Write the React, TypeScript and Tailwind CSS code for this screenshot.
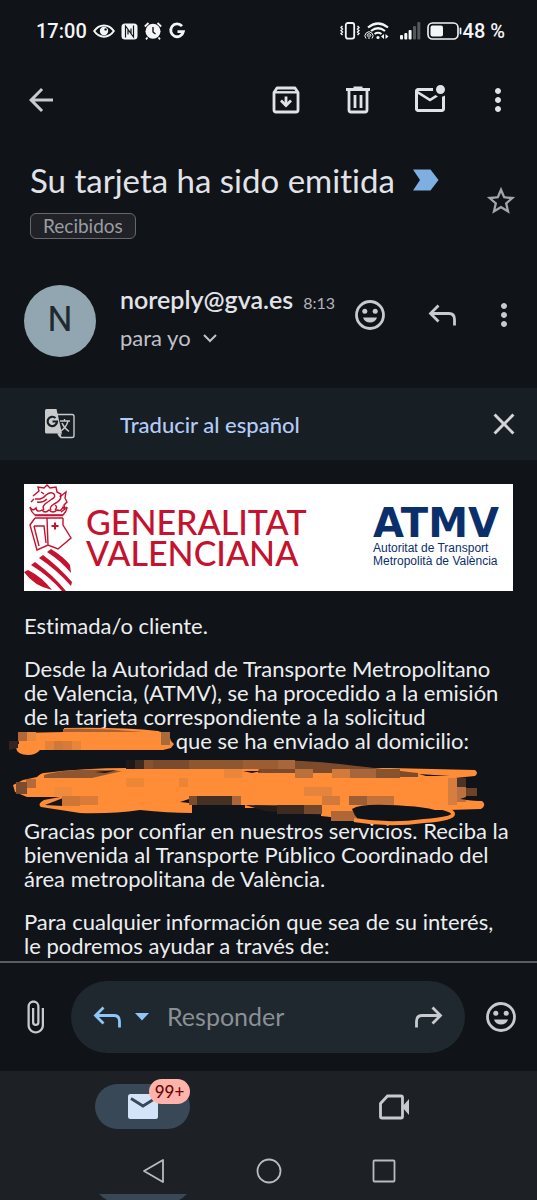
import type { ReactNode } from "react";
import {
    MdArrowBack,
    MdAttachFile,
    MdClose,
    MdMoreVert,
    MdOutlineMarkEmailUnread,
    MdStarBorder,
} from "react-icons/md";

function IconButton({
    label,
    className = "",
    children,
}: {
    label: string;
    className?: string;
    children: ReactNode;
}) {
    return (
        <button
            type="button"
            aria-label={label}
            className={`flex size-9 shrink-0 items-center justify-center ${className}`}
        >
            {children}
        </button>
    );
}

/* ───── Icons ───── */

function SmileIcon() {
    return (
        <svg viewBox="0 0 36 36" className="size-9" fill="none">
            <circle cx="18" cy="18" r="13.5" stroke="currentColor" strokeWidth="2.8" />
            <circle cx="12.8" cy="14.3" r="2.5" fill="currentColor" />
            <circle cx="23.2" cy="14.3" r="2.5" fill="currentColor" />
            <path d="M11 20.5h14c-1 3.2-3.6 5-7 5s-6-1.8-7-5z" fill="currentColor" />
        </svg>
    );
}

function ReplyIcon({ flip = false }: { flip?: boolean }) {
    return (
        <svg
            viewBox="0 0 36 36"
            className={flip ? "size-9 -scale-x-100" : "size-9"}
            fill="none"
            stroke="currentColor"
            strokeWidth="2.8"
        >
            <path d="M14.5 8.5L6.5 16.5l8 8M6.5 16.5H25q5.5 0 5.5 6v6" />
        </svg>
    );
}

function ArchiveIcon() {
    return (
        <svg viewBox="0 0 36 36" className="size-9" fill="none" stroke="currentColor">
            <path d="M6 10.5L9 6h18l3 4.5V28q0 2-2 2H8q-2 0-2-2z" strokeWidth="2.8" strokeLinejoin="round" />
            <path d="M6 10.3h24" strokeWidth="2.4" />
            <path d="M18 14.5v9" strokeWidth="2.8" />
            <path d="M13 18.5l5 5 5-5" strokeWidth="2.8" />
        </svg>
    );
}

function TrashIcon() {
    return (
        <svg viewBox="0 0 36 36" className="size-9" fill="none" stroke="currentColor">
            <path d="M6 7.5h24M13.5 5.8h9" strokeWidth="2.8" />
            <path d="M9 8v20q0 2 2 2h14q2 0 2-2V8" strokeWidth="2.8" />
            <path d="M15 13v13M21 13v13" strokeWidth="2.8" />
        </svg>
    );
}

function TranslateIcon() {
    return (
        <svg viewBox="0 0 32 32" className="size-8">
            <path d="M13 6.5h15q2 0 2 2v19q0 2-2 2H17l-2-5" fill="none" stroke="#c9cacb" strokeWidth="1.4" />
            <path d="M2.5 1H12.5l5.5 24.5H2.5Q1 25.5 1 24V2.5Q1 1 2.5 1z" fill="#c9cacb" />
            <path d="M13 25.5h5l-2.5 4z" fill="#c9cacb" />
            <path d="M11.5 10A4.7 4.7 0 1 0 13 13.5H8.5" fill="none" stroke="#171e24" strokeWidth="2.2" />
            <path
                d="M16 13h10M20.5 11v2M24 13q-1.5 6-7 10M18 15q2 5 7 8.5"
                fill="none"
                stroke="#c9cacb"
                strokeWidth="1.4"
            />
        </svg>
    );
}

/* ───── Status bar ───── */

function StatusBar() {
    return (
        <header className="flex h-[62px] items-center justify-between pr-8 pl-9 font-[Roboto,sans-serif] text-[20px] font-medium text-[#f4f5f6]">
            <div className="flex items-center gap-1.5">
                <span>17:00</span>
                <svg viewBox="0 0 22 16" className="h-4 w-[22px]" fill="none">
                    <path d="M1.2 8C6 .5 16 .5 20.8 8 16 15.5 6 15.5 1.2 8z" stroke="currentColor" strokeWidth="2" />
                    <circle cx="11" cy="8" r="4.2" fill="currentColor" />
                    <circle cx="12.6" cy="6.4" r="1.2" fill="#101318" />
                </svg>
                <svg viewBox="0 0 17 17" className="size-[17px]">
                    <rect x=".5" y=".5" width="16" height="16" rx="3.5" fill="currentColor" />
                    <path
                        d="M4.5 14.5V3l5.5 7.500V5.500M12.500 2.500V14L7 6.500v5"
                        fill="none"
                        stroke="#101318"
                        strokeWidth="1.2"
                    />
                </svg>
                <svg viewBox="0 0 18 18" className="size-[18px]" fill="none" stroke="currentColor">
                    <circle cx="9" cy="9.300" r="7.5" fill="currentColor" stroke="none" />
                    <path d="M.8 4.500L4.500 1M17.200 4.500L13.500 1M3.500 15.500L2 17.300M14.500 15.500l1.500 1.800" strokeWidth="1.8" />
                    <path d="M9 5v5l2.500 2" stroke="#101318" strokeWidth="1.4" />
                </svg>
                <svg viewBox="0 0 18 18" className="size-[18px]" fill="none">
                    <path d="M14 4.200A6.400 6.400 0 1 0 15.400 9.600H9.500" stroke="currentColor" strokeWidth="2.8" />
                </svg>
            </div>
            <div className="flex items-center">
                <svg viewBox="0 0 20 18" className="mr-1 h-[18px] w-5" fill="none" stroke="currentColor">
                    <rect x="5.8" y="1" width="8.4" height="15.6" rx="2" strokeWidth="1.8" />
                    <path
                        d="M2.500 4L1 5.500l1.500 1.500L1 8.500 2.500 10 1 11.500 2.500 13M17.500 4L19 5.500 17.500 7 19 8.500 17.500 10l1.500 1.500-1.500 1.500"
                        strokeWidth="1.4"
                    />
                </svg>
                <svg viewBox="0 0 26 18" className="mr-2.5 h-[18px] w-[26px]" fill="none" stroke="currentColor">
                    <path d="M4 5.500Q14 -2.500 24 5.500M7 9q7-5.500 14 0" strokeWidth="2.2" />
                    <path d="M10.500 12q3.500-2.500 7 0" strokeWidth="2" />
                    <circle cx="14" cy="15.500" r="1.600" fill="currentColor" stroke="none" />
                    <path d="M2 16.500a4 4 0 1 1 6 0M3.500 14.500a1.800 1.800 0 1 1 3 0M5 13v4" strokeWidth="1" />
                    <path d="M20 12v5l-3-2.500zM21.500 12v5l3-2.500z" fill="currentColor" stroke="none" />
                </svg>
                <svg viewBox="0 0 21 18" className="mr-1.5 h-[18px] w-[21px]" fill="currentColor">
                    <rect x="0" y="13" width="3" height="4.5" rx="1" />
                    <rect x="4.3" y="11" width="3" height="6.5" rx="1" />
                    <rect x="8.6" y="8" width="3" height="9.5" rx="1" />
                    <rect x="13" y="4" width="3" height="13.5" rx="1" opacity=".3" />
                    <rect x="17.3" y="0" width="3" height="17.5" rx="1" opacity=".3" />
                </svg>
                <svg viewBox="0 0 36 18" className="h-[18px] w-9" fill="none">
                    <rect x="1" y="1" width="30" height="16" rx="4.5" stroke="currentColor" strokeWidth="1.6" />
                    <rect x="3.5" y="3.5" width="12.5" height="11" rx="2" fill="currentColor" />
                    <path d="M33.500 6.500v5" stroke="currentColor" strokeWidth="1.8" strokeLinecap="round" />
                </svg>
                <span>48 %</span>
            </div>
        </header>
    );
}

/* ───── Message header ───── */

function Toolbar() {
    return (
        <nav aria-label="Acciones" className="flex h-[76px] items-center pr-[21px] pl-[23px] text-[#e1e3e8]">
            <IconButton label="Atrás" className="mr-auto text-[#c8cad0]">
                <MdArrowBack className="size-9" />
            </IconButton>
            <div className="flex items-center gap-9">
                <IconButton label="Archivar">
                    <ArchiveIcon />
                </IconButton>
                <IconButton label="Eliminar">
                    <TrashIcon />
                </IconButton>
                <IconButton label="Marcar como no leído">
                    <MdOutlineMarkEmailUnread className="size-9" />
                </IconButton>
                <IconButton label="Más opciones" className="-ml-1">
                    <MdMoreVert className="size-9" />
                </IconButton>
            </div>
        </nav>
    );
}

function Subject() {
    return (
        <section className="flex items-center justify-between pt-[21px] pr-[18px] pl-[30px]">
            <div>
                <h1 className="flex items-center gap-[18px] text-[33px] leading-[42px] text-[#e1e3e8]">
                    Su tarjeta ha sido emitida
                    <svg viewBox="0 0 26 22" className="h-[22px] w-[26px]">
                        <path d="M0 .5h17.500l8 10.500-8 10.500H0L7 11z" fill="#7db0e0" />
                    </svg>
                </h1>
                <span className="mt-3 inline-flex h-[26px] items-center rounded-md border border-[#66686c] bg-[#202227] px-3 text-[19px] text-[#9b9da2]">
                    Recibidos
                </span>
            </div>
            <IconButton label="Destacar" className="mt-1 text-[#a4a6ab]">
                <MdStarBorder className="size-[34px]" />
            </IconButton>
        </section>
    );
}

function Sender() {
    return (
        <section className="flex items-center pt-11 pr-[15px] pb-8 pl-6">
            <div className="flex size-[72px] items-center justify-center rounded-full bg-[#91a6b0] font-[Roboto,sans-serif] text-[35px] text-[#1f292f]">
                N
            </div>
            <div className="ml-6 flex-1 pb-1">
                <div className="flex items-baseline gap-2.5">
                    <span className="text-[25px] leading-8 font-semibold text-[#e1e3e8]">noreply@gva.es</span>
                    <span className="text-[16px] text-[#b3b5ba]">8:13</span>
                </div>
                <button type="button" className="mt-[7px] flex items-center gap-3 text-[22px] leading-8 text-[#c0c2c7]">
                    para yo
                    <svg viewBox="0 0 14 9" className="h-[9px] w-3.5" fill="none">
                        <path d="M1 1l6 6 6-6" stroke="currentColor" strokeWidth="2" />
                    </svg>
                </button>
            </div>
            <div className="-mt-3 flex items-center gap-9 text-[#c8cad0]">
                <IconButton label="Añadir reacción">
                    <SmileIcon />
                </IconButton>
                <IconButton label="Responder">
                    <ReplyIcon />
                </IconButton>
                <IconButton label="Más" className="-ml-2.5">
                    <MdMoreVert className="size-9" />
                </IconButton>
            </div>
        </section>
    );
}

function TranslateBar() {
    return (
        <section className="-mt-0.5 flex h-[72px] items-center bg-[#171e24] pr-[15px] pl-11">
            <TranslateIcon />
            <button type="button" className="ml-11 text-[22px] font-medium text-[#b4cbf7]">
                Traducir al español
            </button>
            <IconButton label="Cerrar" className="ml-auto text-[#d3d4d6]">
                <MdClose className="size-9" />
            </IconButton>
        </section>
    );
}

/* ───── Letterhead ───── */

function Crest() {
    return (
        <svg viewBox="0 0 50 107" className="h-[107px] w-[50px] shrink-0" fill="none" stroke="#c4122f" strokeWidth="1.4">
            <path d="M7 18l3-3M9 12l6-5-1-4 6 1 3-3 3 3 6-1 1 5 4 2-1 3" />
            <path d="M11 15h5q4-1 6-4 5-4 8-1 2 3-2 5l-7 5q-3 3-1 6M13 18q6 1 10-3M27 26q-2-3 3-6 7-3 7-8l5-4-1 6 2 4-3 3 1 4-4 3" />
            <path d="M17 8l3 2M31 21q3 2 0 5" />
            <path d="M6 23q1 5 5 8h28q4-4 4-8M6 23q3 5 6 1 1 5 6 2 3 4 7 0 4 4 8 0 4 2 6-3 1 3 4 0" />
            <path d="M11 31.500h28M11 34h28" strokeWidth="1.6" />
            <path d="M11 34l-5 7 7 25 11-5 10 4 13-11-8-13V34M23 34l1 27M10 42h10l2 17M10 42l5 20" />
            <path d="M31 38.500v7M27.500 42h7" strokeWidth="2" />
            <path
                d="M23 68l4-3q13 8 19 16l1 8q-10-12-24-21zM15 74l4-3q16 12 29 27l-1 4Q33 86 15 74zM7 81l4-3q18 13 31 29h-4Q25 92 7 81zM0 88l4-2q14 7 24 20Q10 102 0 88z"
                fill="#c4122f"
                stroke="none"
            />
        </svg>
    );
}

function Letterhead() {
    return (
        <div className="flex h-[107px] overflow-hidden bg-white">
            <Crest />
            <p className="mt-[22px] ml-3 text-[34px] leading-[31px] font-medium text-[#c4122f]">
                GENERALITAT
                <br />
                VALENCIANA
            </p>
            <div className="mt-5 ml-auto w-[140px] text-[#0b2f6b]">
                <p className="font-['DejaVu_Sans',sans-serif] text-[40px] leading-[38px] font-bold">ATMV</p>
                <p className="font-['Liberation_Sans',sans-serif] text-[12px] leading-[13px] whitespace-nowrap">
                    Autoritat de Transport
                    <br />
                    Metropolità de València
                </p>
            </div>
        </div>
    );
}

/* ───── Scribbled-out details ───── */

const MOSAIC_SMALL = [
    { x: 18, y: 734, w: 9, h: 9, fill: "#b4683a" },
    { x: 27, y: 734, w: 9, h: 9, fill: "#e98840" },
    { x: 45, y: 743, w: 9, h: 9, fill: "#e5823a" },
    { x: 54, y: 743, w: 9, h: 9, fill: "#cf7838" },
    { x: 63, y: 743, w: 9, h: 9, fill: "#d87b36" },
    { x: 72, y: 743, w: 9, h: 9, fill: "#e98538" },
    { x: 161, y: 734, w: 9, h: 13, fill: "#a86a3c" },
];

const MOSAIC_LARGE = [
    { x: 126, y: 761, w: 9, h: 9, fill: "#20191a" },
    { x: 135, y: 761, w: 9, h: 9, fill: "#3d2a20" },
    { x: 144, y: 761, w: 9, h: 9, fill: "#875230" },
    { x: 153, y: 761, w: 36, h: 9, fill: "#7a4b2d" },
    { x: 189, y: 761, w: 54, h: 9, fill: "#8f5730" },
    { x: 243, y: 761, w: 35, h: 9, fill: "#9d5d32" },
    { x: 278, y: 761, w: 17, h: 9, fill: "#a9663a" },
    { x: 224, y: 770, w: 18, h: 9, fill: "#ea863c" },
    { x: 295, y: 770, w: 18, h: 9, fill: "#b9703b" },
    { x: 332, y: 770, w: 18, h: 9, fill: "#d17a3a" },
    { x: 350, y: 770, w: 26, h: 9, fill: "#a7653b" },
    { x: 376, y: 770, w: 24, h: 9, fill: "#86532f" },
    { x: 26, y: 780, w: 10, h: 9, fill: "#b5693a" },
    { x: 16, y: 783, w: 11, h: 12, fill: "#7e4c2c" },
    { x: 126, y: 779, w: 18, h: 9, fill: "#ee8638" },
    { x: 179, y: 779, w: 9, h: 9, fill: "#ea8538" },
    { x: 54, y: 788, w: 18, h: 9, fill: "#f08a3d" },
    { x: 304, y: 788, w: 28, h: 9, fill: "#e6843d" },
    { x: 62, y: 797, w: 18, h: 10, fill: "#cf7636" },
    { x: 80, y: 797, w: 18, h: 9, fill: "#d97c38" },
    { x: 189, y: 797, w: 9, h: 9, fill: "#7a4b2d" },
    { x: 197, y: 797, w: 35, h: 9, fill: "#453024" },
    { x: 232, y: 797, w: 9, h: 9, fill: "#a9663a" },
    { x: 322, y: 797, w: 18, h: 9, fill: "#d27a3b" },
    { x: 349, y: 797, w: 18, h: 9, fill: "#9d5e34" },
    { x: 367, y: 797, w: 27, h: 9, fill: "#c27239" },
    { x: 277, y: 806, w: 27, h: 9, fill: "#3d2b22" },
    { x: 304, y: 806, w: 18, h: 9, fill: "#74482c" },
    { x: 331, y: 812, w: 26, h: 10, fill: "#b06635" },
    { x: 448, y: 779, w: 9, h: 27, fill: "#d67d40" },
    { x: 457, y: 779, w: 9, h: 9, fill: "#4a342a" },
    { x: 457, y: 788, w: 9, h: 15, fill: "#bb7041" },
    { x: 466, y: 788, w: 11, h: 9, fill: "#6d4228" },
];

type MosaicCell = { x: number; y: number; w: number; h: number; fill: string };

function Mosaic({ cells }: { cells: MosaicCell[] }) {
    return (
        <g>
            {cells.map((c) => (
                <rect key={`${c.x}-${c.y}`} x={c.x} y={c.y} width={c.w} height={c.h} fill={c.fill} />
            ))}
        </g>
    );
}

function HiddenNumber() {
    return (
        <span className="relative inline-block h-4 w-[146px]">
            <svg
                viewBox="8 727 168 32"
                className="absolute -top-2 -left-4 h-8 w-[168px] max-w-none"
                aria-label="Dato oculto"
            >
                <path
                    d="M18 735l46-1v-4q58-1 94 3 12 3 13 10l3 3-3 4-8 2H40q-4 5-12 5-11 0-12-7 0-4 3-4z"
                    fill="#ff8d37"
                />
                <path d="M9 743h9v7l-9 2z" fill="#32241f" />
                <path d="M63 731q40-1 80 3H63z" fill="#a66135" />
                <Mosaic cells={MOSAIC_SMALL} />
            </svg>
        </span>
    );
}

function HiddenAddress() {
    return (
        <div className="relative h-[66px]">
            <svg
                viewBox="8 758 480 70"
                className="absolute top-1 -left-4 h-[70px] w-[480px] max-w-none"
                aria-label="Dirección oculta"
            >
                <path
                    d="M37 778q4-4 7-4 40-5 84-5h262l85 2q4 3 0 6l-20 2-5 21 32 2q5 4-1 8l-32 1H357l-8 9-28-3v-8H192v5q-24 0-52-3-28 4-60 3L41 808q-4-3 3-7l16-3H27l-12-5-2-7 10-5z"
                    fill="#ff8d37"
                />
                <path d="M260 761q45 0 80 4 50 6 78 9v4h-45l-25-4h-90z" fill="#7b4b2c" />
                <path d="M44 776q20-6 58-5l20 1-30 7H44z" fill="#8f5430" />
                <path d="M95 773l22-2-12 3zM243 772h18l-9 2zM419 775l31 2h-24z" fill="#14151a" />
                <path d="M45 806l18-7v8z" fill="#14151a" />
                <path d="M180 803l12-4-3 5zM192 806h53v12h-53z" fill="#101318" />
                <path d="M245 806l76 1v9l-56-4z" fill="#251d1b" />
                <Mosaic cells={MOSAIC_LARGE} />
                <path d="M352 810q8-5 35-4 42 1 57 8 4 4-7 5-40 4-79 1-4-4-6-10z" fill="#101318" />
                <path
                    d="M354 821q35 6 70 1 29-2 29-7 0-6-30-9"
                    fill="none"
                    stroke="#ff8d37"
                    strokeWidth="4"
                />
                <path d="M466 779h16v23l-14-1-8-1 6-2h12v-9h-12z" fill="#101318" />
            </svg>
        </div>
    );
}

function Message() {
    return (
        <main className="flex-1 px-6 pt-6 text-[22px] leading-6 text-[#eceef0]">
            <Letterhead />
            <p className="mt-[23px]">Estimada/o cliente.</p>
            <p className="mt-[19px] whitespace-nowrap">
                Desde la Autoridad de Transporte Metropolitano
                <br />
                de Valencia, (ATMV), se ha procedido a la emisión
                <br />
                de la tarjeta correspondiente a la solicitud
                <br />
                <HiddenNumber /> que se ha enviado al domicilio:
            </p>
            <HiddenAddress />
            <p className="whitespace-nowrap">
                Gracias por confiar en nuestros servicios. Reciba la
                <br />
                bienvenida al Transporte Público Coordinado del
                <br />
                área metropolitana de València.
            </p>
            <p className="mt-[19px] whitespace-nowrap">
                Para cualquier información que sea de su interés,
                <br />
                le podremos ayudar a través de:
            </p>
        </main>
    );
}

/* ───── Bottom area ───── */

function ReplyBar() {
    return (
        <section className="flex h-[110px] items-center border-t-2 border-[#5b5d61] pr-[18px] pl-[17px] text-[#c8cad0]">
            <IconButton label="Adjuntar archivo">
                <MdAttachFile className="size-9" />
            </IconButton>
            <div className="mx-[18px] flex h-[72px] flex-1 items-center rounded-full bg-[#1f272f] px-[18px]">
                <IconButton label="Responder" className="text-[#90c5f8]">
                    <ReplyIcon />
                </IconButton>
                <button type="button" aria-label="Tipo de respuesta" className="ml-2.5 text-[#90c5f8]">
                    <svg viewBox="0 0 14 8" className="h-2 w-3.5">
                        <path d="M0 0h14L7 7.500z" fill="currentColor" />
                    </svg>
                </button>
                <input
                    type="text"
                    aria-label="Responder"
                    placeholder="Responder"
                    className="ml-[18px] w-0 flex-1 bg-transparent text-[25px] outline-none placeholder:text-[#8b9096]"
                />
                <IconButton label="Reenviar">
                    <ReplyIcon flip />
                </IconButton>
            </div>
            <IconButton label="Emoji">
                <SmileIcon />
            </IconButton>
        </section>
    );
}

function BottomNav() {
    return (
        <footer className="bg-[#1d2024]">
            <nav aria-label="Secciones" className="grid h-[71px] grid-cols-[285px_1fr] items-center">
                <button
                    type="button"
                    aria-label="Correo"
                    className="relative flex h-[45px] w-[95px] items-center justify-center justify-self-center rounded-full bg-[#384857]"
                >
                    <svg viewBox="0 0 30 25" className="h-[25px] w-[30px]">
                        <rect width="30" height="25" rx="2.5" fill="#d3e4f8" />
                        <path d="M3 4.500l12 7.500 12-7.500" fill="none" stroke="#384857" strokeWidth="2.8" />
                    </svg>
                    <span className="absolute -top-[5px] right-0 flex h-[25px] w-[41px] items-center justify-center rounded-full bg-[#ffb3aa] text-[17px] font-medium text-[#690608]">
                        99+
                    </span>
                </button>
                <button type="button" aria-label="Videollamada" className="ml-[93px] justify-self-start text-[#c8cad0]">
                    <svg viewBox="0 0 32 26" className="h-[26px] w-8" fill="none">
                        <path
                            d="M2.500 9.500L9.500 2H23q1.500 0 1.500 1.500v19q0 1.500-1.500 1.500H4q-1.500 0-1.500-1.500z"
                            stroke="currentColor"
                            strokeWidth="2.8"
                        />
                        <path d="M24 13l7-8v16z" fill="currentColor" />
                    </svg>
                </button>
            </nav>
            <div className="flex h-[52px] items-center justify-center gap-[90px] pt-1.5 text-[#b9bbbe]">
                <button type="button" aria-label="Volver">
                    <svg viewBox="0 0 24 26" className="h-[26px] w-6" fill="none">
                        <path d="M2 13L21 2v22z" stroke="currentColor" strokeWidth="1.8" strokeLinejoin="round" />
                    </svg>
                </button>
                <button type="button" aria-label="Inicio">
                    <svg viewBox="0 0 26 26" className="size-[26px]" fill="none">
                        <circle cx="13" cy="13" r="11.5" stroke="currentColor" strokeWidth="1.8" />
                    </svg>
                </button>
                <button type="button" aria-label="Recientes">
                    <svg viewBox="0 0 24 24" className="size-6" fill="none">
                        <rect x="1.5" y="1.5" width="21" height="21" rx="1" stroke="currentColor" strokeWidth="1.8" />
                    </svg>
                </button>
            </div>
            <svg viewBox="0 0 88 6" className="ml-[99px] h-1.5 w-[88px]">
                <path d="M0 0h88q-4 4-8 6H8Q4 4 0 0z" fill="#384857" />
            </svg>
        </footer>
    );
}

export default function App() {
    return (
        <div className="flex min-h-screen flex-col bg-[#101318] font-[Lato,'Noto_Sans',sans-serif] [font-variant-ligatures:none]">
            <StatusBar />
            <Toolbar />
            <Subject />
            <Sender />
            <TranslateBar />
            <Message />
            <ReplyBar />
            <BottomNav />
        </div>
    );
}
